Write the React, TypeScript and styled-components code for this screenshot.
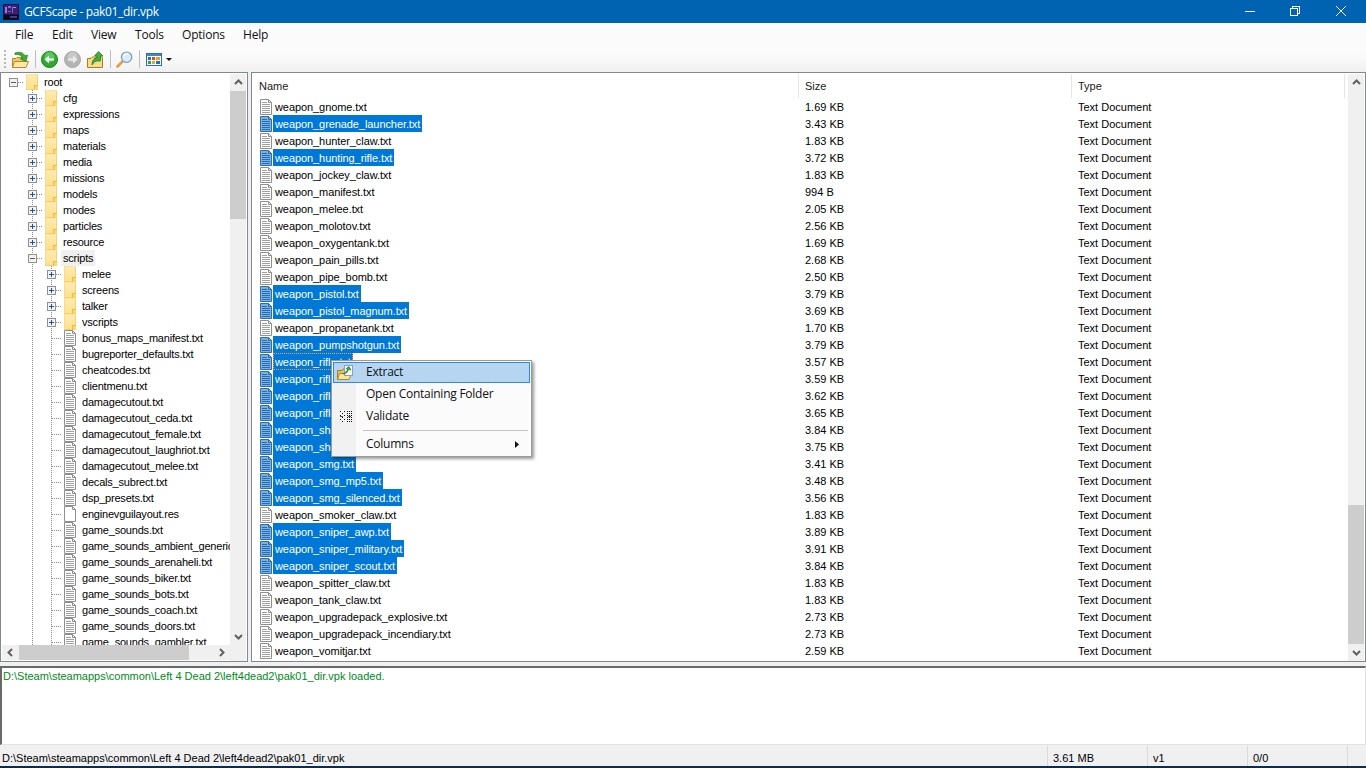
import React from "react";
import styled, { createGlobalStyle } from "styled-components";

const Global = createGlobalStyle`
  html, body { margin: 0; padding: 0; height: 100%; overflow: hidden; background: #f0f0f0; }
  #root { height: 768px; }
  * { box-sizing: border-box; }
`;

const UI = `"Liberation Sans", Arial, sans-serif`;
const SEGOE = `"Open Sans", "Noto Sans", sans-serif`;

const Window = styled.div`
  position: relative;
  width: 1366px;
  height: 768px;
  display: flex;
  flex-direction: column;
  overflow: hidden;
  font-family: ${UI};
  font-size: 11px;
  color: #000;
  background: #f0f0f0;
`;
const TitleBar = styled.div`
  height: 23px;
  flex: none;
  background: #0063b1;
  display: flex;
  align-items: center;
  padding: 0 2px 0 3px;
  color: #fff;
  font-family: ${SEGOE};
  font-size: 12px;
  letter-spacing: -0.35px;
`;
const TitleText = styled.span`
  margin-left: 5px;
  flex: 1;
`;
const WinBtn = styled.div`
  width: 46px;
  height: 23px;
  padding-bottom: 2px;
  display: flex;
  align-items: center;
  justify-content: center;
  &:first-of-type { margin-right: -1px; }
`;
const MenuBar = styled.div`
  height: 23px;
  flex: none;
  background: #fbfbfb;
  display: flex;
  align-items: center;
  font-family: ${SEGOE};
  font-size: 12px;
  letter-spacing: -0.2px;
  color: #111;
`;
const MenuItem = styled.span<{ $x: number }>`
  width: ${(p) => p.$x}px;
  flex: none;
  &:first-child { margin-left: 15px; }
`;
const Toolbar = styled.div`
  height: 26px;
  flex: none;
  display: flex;
  align-items: center;
  padding-left: 4px;
  background: linear-gradient(to bottom, #fcfcfc 0%, #fbfbfb 30%, #f1f1f1 100%);
`;
const Grip = styled.div`
  width: 2px;
  height: 18px;
  margin-right: 3px;
  background: repeating-linear-gradient(to bottom, #b8b8b8 0 2px, transparent 2px 4px);
`;
const ToolBtn = styled.div`
  width: 23px;
  height: 22px;
  flex: none;
  display: flex;
  align-items: center;
  justify-content: center;
`;
const ToolSep = styled.div`
  width: 1px;
  height: 18px;
  flex: none;
  margin: 0 2px 0 3px;
  background: #bdbdbd;
`;
const DropArrow = styled.svg`
  margin-left: 1px;
  flex: none;
`;
const Panes = styled.div`
  height: 590px;
  flex: none;
  display: flex;
  gap: 3px;
`;
const Pane = styled.div<{ $w: number }>`
  width: ${(p) => p.$w}px;
  flex: none;
  height: 100%;
  border: 1px solid #828790;
  background: #fff;
  display: flex;
  position: relative;
  padding: 1px 1px 0 1px;
`;
const TreeCol = styled.div`
  flex: 1;
  min-width: 0;
  display: flex;
  flex-direction: column;
`;
const TreeBody = styled.div`
  flex: 1;
  overflow: hidden;
  padding: 0 0 0 2px;
  min-height: 0;
  letter-spacing: -0.2px;
`;
const TreeRow = styled.div`
  height: 16px;
  display: flex;
  align-items: center;
  white-space: nowrap;
`;
const Indent = styled.div<{ $line?: boolean; $elbow?: boolean }>`
  width: 19px;
  height: 16px;
  flex: none;
  display: flex;
  align-items: center;
  justify-content: center;
  background-repeat: no-repeat;
  background-image: ${(p) =>
    [
      p.$line ? "repeating-linear-gradient(to bottom, #8a8a8a 0 1px, transparent 1px 2px)" : "",
      p.$elbow ? "repeating-linear-gradient(to right, #8a8a8a 0 1px, transparent 1px 2px)" : "",
    ]
      .filter(Boolean)
      .join(",") || "none"};
  background-size: ${(p) =>
    [p.$line ? "1px 16px" : "", p.$elbow ? "10px 1px" : ""].filter(Boolean).join(",") || "auto"};
  background-position: ${(p) =>
    [p.$line ? "9px 0" : "", p.$elbow ? "10px 8px" : ""].filter(Boolean).join(",") || "0 0"};
`;
const TreeIconSlot = styled.div`
  width: 12px;
  height: 16px;
  flex: none;
  margin-left: 3px;
`;
const TreeLabel = styled.span<{ $sel?: boolean }>`
  margin-left: 4px;
  padding: 0 2px;
  height: 16px;
  line-height: 16px;
  background: ${(p) => (p.$sel ? "#f0f0f0" : "transparent")};
`;
const VScroll = styled.div`
  width: 16px;
  flex: none;
  height: 100%;
  background: #f0f0f0;
  display: flex;
  flex-direction: column;
`;
const ScrollBtn = styled.div`
  height: 17px;
  flex: none;
  display: flex;
  align-items: center;
  justify-content: center;
`;
const Thumb = styled.div<{ $h: number; $top: number }>`
  height: ${(p) => p.$h}px;
  margin-top: ${(p) => p.$top}px;
  flex: none;
  background: #cdcdcd;
`;
const Spring = styled.div`
  flex: 1;
`;
const Corner = styled.div`
  height: 16px;
  flex: none;
`;
const HScroll = styled.div`
  height: 15px;
  flex: none;
  background: #f0f0f0;
  display: flex;
  align-items: center;
  margin-bottom: 1px;
`;
const HBtn = styled.div`
  width: 17px;
  height: 15px;
  flex: none;
  display: flex;
  align-items: center;
  justify-content: center;
`;
const HThumb = styled.div`
  width: 170px;
  height: 15px;
  flex: none;
  background: #cdcdcd;
`;
const ListCol = styled.div`
  flex: 1;
  min-width: 0;
  display: flex;
  flex-direction: column;
`;
const Header = styled.div`
  height: 24px;
  flex: none;
  display: flex;
  color: #1a1a1a;
`;
const HeadCell = styled.div<{ $w: number }>`
  width: ${(p) => p.$w}px;
  flex: none;
  padding: 5px 0 0 6px;
  border-right: 1px solid #e5e5e5;
  line-height: 15px;
`;
const FileRow = styled.div`
  height: 17px;
  flex: none;
  display: flex;
  align-items: center;
  white-space: nowrap;
`;
const NameCell = styled.div`
  width: 546px;
  flex: none;
  display: flex;
  align-items: center;
  padding-left: 7px;
`;
const FileLabel = styled.span<{ $sel?: boolean; $focus?: boolean }>`
  margin-left: 1px;
  height: 17px;
  line-height: 18px;
  padding: 0 2px;
  letter-spacing: -0.08px;
  background: ${(p) => (p.$sel ? "#0078d7" : "transparent")};
  color: ${(p) => (p.$sel ? "#fff" : "#000")};
  outline: ${(p) => (p.$focus ? "1px dotted #f0a040" : "none")};
  outline-offset: -1px;
`;
const Cell = styled.div<{ $w: number }>`
  width: ${(p) => p.$w}px;
  flex: none;
  padding-left: 6px;
  line-height: 18px;
`;
const Log = styled.div`
  height: 79px;
  flex: none;
  margin-top: 4px;
  background: #fff;
  border-top: 2px solid #696969;
  border-left: 2px solid #696969;
  border-right: 1px solid #e3e3e3;
  border-bottom: 1px solid #e3e3e3;
  padding: 1px 0 0 1px;
  color: #008a20;
  line-height: 15px;
`;
const Status = styled.div`
  height: 20px;
  flex: none;
  margin-top: 1px;
  display: flex;
  align-items: center;
`;
const StatusPanel = styled.div<{ $w: number }>`
  width: ${(p) => p.$w}px;
  height: 20px;
  flex: none;
  padding-left: 5px;
  line-height: 24px;
  border-right: 1px solid #d9d9d9;
  white-space: nowrap;
  overflow: hidden;
  &:first-child { padding-left: 2px; }
`;
const Strip = styled.div`
  flex: 1;
  background: #0b2c4d;
`;
const CtxMenu = styled.div`
  position: absolute;
  left: 331px;
  top: 360px;
  width: 201px;
  height: 97px;
  background: linear-gradient(to right, #f1f1f1 0 24px, #fbfbfb 24px);
  border: 1px solid #9a9a9a;
  box-shadow: 2px 2px 3px rgba(0, 0, 0, 0.4);
  padding: 1px;
  display: flex;
  flex-direction: column;
  font-family: ${SEGOE};
  font-size: 12px;
  letter-spacing: -0.25px;
  color: #111;
`;
const CtxItem = styled.div<{ $hover?: boolean }>`
  height: 21px;
  margin-bottom: 1px;
  flex: none;
  display: flex;
  align-items: center;
  position: relative;
  border: 1px solid ${(p) => (p.$hover ? "#2f8ae0" : "transparent")};
  background: ${(p) => (p.$hover ? "#b5d5f1" : "transparent")};
`;
const CtxIcon = styled.div`
  width: 23px;
  flex: none;
  display: flex;
  align-items: center;
  justify-content: center;
`;
const CtxText = styled.span`
  margin: 0 0 2px 9px;
  flex: 1;
`;
const CtxSep = styled.div`
  height: 1px;
  flex: none;
  margin: 2px 2px 3px 30px;
  background: #c4c4c4;
`;
const SubArrow = styled.svg`
  margin-right: 10px;
  flex: none;
`;

const Chevron = ({ dir }: { dir: "up" | "down" | "left" | "right" }) => {
  const pts = { up: "1,6 4.5,2.5 8,6", down: "1,3 4.5,6.5 8,3", left: "6,1 2.5,4.5 6,8", right: "3,1 6.5,4.5 3,8" }[dir];
  return (
    <svg width="9" height="9" viewBox="0 0 9 9">
      <polyline points={pts} fill="none" stroke="#606060" strokeWidth="2" />
    </svg>
  );
};

const FolderTall = () => (
  <svg width="12" height="16" viewBox="0 0 12 16" style={{ display: "block" }} shapeRendering="crispEdges">
    <defs>
      <linearGradient id="fg" x1="0" y1="0" x2="0" y2="1">
        <stop offset="0" stopColor="#ffebb0" />
        <stop offset="1" stopColor="#ffe08a" />
      </linearGradient>
    </defs>
    <rect x="0" y="0" width="12" height="16" fill="url(#fg)" />
    <rect x="0" y="0" width="1" height="16" fill="#f7dc8e" />
    <rect x="11" y="0" width="1" height="11" fill="#f3d27a" />
    <rect x="0" y="0" width="12" height="1" fill="#f7e2a4" />
    <rect x="8" y="12" width="4" height="4" fill="#ffd766" />
    <rect x="8" y="11" width="4" height="1" fill="#e7bd55" />
    <rect x="8" y="11" width="1" height="5" fill="#e7bd55" />
    <rect x="0" y="15" width="8" height="1" fill="#f3d27a" />
  </svg>
);

const FileIcon = ({ blank, sel }: { blank?: boolean; sel?: boolean }) => {
  const border = sel ? "#2f6fa8" : "#8f8f8f";
  const fill = sel ? "#7bb0e2" : "#fff";
  const line = sel ? "#2a6cb0" : "#a0a0a0";
  return (
    <svg width="12" height="16" viewBox="0 0 12 16" style={{ display: "block" }}>
      <path d="M0.5 0.5H8.5L11.5 3.5V15.5H0.5Z" fill={fill} stroke={border} />
      <path d="M8.5 0.5V3.5H11.5" fill="none" stroke={border} />
      {!blank &&
        [3, 5, 7, 9, 11, 13].map((y) => (
          <rect key={y} x="2" y={y} width={y === 3 ? 5 : 8} height="1" fill={line} />
        ))}
    </svg>
  );
};

const Expander = ({ open }: { open?: boolean }) => (
  <svg width="9" height="9" viewBox="0 0 9 9" style={{ display: "block", background: "#fff" }}>
    <rect x="0.5" y="0.5" width="8" height="8" fill="#f2f2f2" stroke="#8e8f8f" />
    <rect x="2" y="4" width="5" height="1" fill={open ? "#5a5a6a" : "#2a4a9a"} />
    {!open && <rect x="4" y="2" width="1" height="5" fill="#2a4a9a" />}
  </svg>
);

const AppIcon = () => (
  <svg width="16" height="16" viewBox="0 0 16 16" shapeRendering="crispEdges">
    <rect width="16" height="16" fill="#2a0f4a" />
    <rect x="1" y="1" width="14" height="9" fill="#3b1f7a" />
    <rect x="2" y="3" width="2" height="6" fill="#8f7fd0" />
    <rect x="5" y="2" width="3" height="2" fill="#7f6fc0" />
    <rect x="9" y="3" width="4" height="1" fill="#a090e0" />
    <rect x="9" y="3" width="1" height="6" fill="#7f6fc0" />
    <rect x="5" y="7" width="3" height="1" fill="#6a5ab0" />
    <rect x="0" y="11" width="16" height="5" fill="#0c0818" />
    <rect x="7" y="12" width="7" height="2" fill="#4a3a8a" />
  </svg>
);

const OpenIcon = () => (
  <svg width="17" height="17" viewBox="0 0 17 17">
    <path d="M0.5 7.5H4L5 6.5H13V16.5H0.5Z" fill="#f0c860" stroke="#b08a2a" />
    <path d="M0.5 16.5L2.5 10.5H16.5L14 16.5Z" fill="#fde8a6" stroke="#b08a2a" />
    <path d="M3 2C7 0.5 11 1 13 5L15.5 4L14 10.5L8.5 8L10.5 6.8C9 4 6.5 3 3 3.5Z" fill="#3fae3a" stroke="#1f7a1f" strokeWidth="0.7" />
  </svg>
);

const UpIcon = () => (
  <svg width="17" height="17" viewBox="0 0 17 17">
    <path d="M0.5 7.5H4L5 6H15.5V16.5H0.5Z" fill="#f8dc8a" stroke="#a87f20" />
    <path d="M3.5 6.5H15.5" stroke="#e0b040" />
    <path d="M5 14C5 9.5 7 7 10 6.5V5H7.5L11.5 0.5L16 5H13.5V10H10.5C8.5 10 6.5 11.5 5 14Z" fill="#3fae3a" stroke="#1f7a1f" strokeWidth="0.7" />
  </svg>
);

const RoundArrow = ({ flip, gray }: { flip?: boolean; gray?: boolean }) => (
  <svg width="17" height="17" viewBox="0 0 17 17">
    <circle cx="8.5" cy="8.5" r="8" fill={gray ? "#b4b4b4" : "#2fa82f"} stroke={gray ? "#a8a8a8" : "#1b7f1b"} />
    <circle cx="8.5" cy="6" r="5" fill={gray ? "#c8c8c8" : "#58c858"} />
    <path
      d={flip ? "M4 7.5H9V4.5L13.5 8.5L9 12.5V9.5H4Z" : "M13 7.5H8V4.5L3.5 8.5L8 12.5V9.5H13Z"}
      fill={gray ? "#eaeaea" : "#fff"}
    />
  </svg>
);

const SearchIcon = () => (
  <svg width="17" height="17" viewBox="0 0 17 17">
    <path d="M7 10L1.5 15.5" stroke="#e0a040" strokeWidth="2.6" strokeLinecap="round" />
    <circle cx="10.6" cy="6.2" r="5.2" fill="#dcedfa" stroke="#7b98b4" strokeWidth="1.2" />
    <path d="M7.5 5C8.5 3.5 10.5 2.6 12.5 3" stroke="#fff" strokeWidth="1.2" fill="none" />
  </svg>
);

const ViewIcon = () => (
  <svg width="16" height="13" viewBox="0 0 16 13" shapeRendering="crispEdges">
    <rect x="0.5" y="0.5" width="15" height="12" fill="#fff" stroke="#2a6fb5" />
    <rect x="1" y="1" width="14" height="2" fill="#3f86cc" />
    <rect x="2" y="4" width="3" height="3" fill="#2a6fb5" />
    <rect x="6" y="4" width="3" height="3" fill="#d84a2a" />
    <rect x="10" y="4" width="4" height="3" fill="#e8a020" />
    <rect x="2" y="8" width="3" height="3" fill="#3aa03a" />
    <rect x="6" y="8" width="3" height="3" fill="#d8b020" />
    <rect x="10" y="8" width="4" height="3" fill="#2a6fb5" />
  </svg>
);

const ExtractIcon = () => (
  <svg width="17" height="15" viewBox="0 0 17 15">
    <path d="M0.5 5.5H5L6 4H11V14.5H0.5Z" fill="#e8c060" stroke="#a87f20" />
    <path d="M0.5 14.5L2.5 8.5H14.5L12 14.5Z" fill="#fde59a" stroke="#b08a2a" />
    <rect x="7.5" y="0.5" width="8" height="10" fill="#fff" stroke="#8aa0b8" />
    <path d="M6 9C9 9 11 7 11.5 4.5L14 5L12 1.5L9 3.5L10.5 4C10 6 8.5 7.5 6 9Z" fill="#38a838" stroke="#1f7a1f" strokeWidth="0.6" />
  </svg>
);

const ValidateIcon = () => (
  <svg width="12" height="12" viewBox="0 0 12 12" shapeRendering="crispEdges">
    {[0, 2, 4, 6, 8, 10].flatMap((y) =>
      [0, 2, 4, 7, 9, 11].map((x) =>
        (x + y) % 4 !== 2 ? <rect key={`${x}-${y}`} x={x} y={y} width="1" height="1" fill="#111" /> : null
      )
    )}
    <rect x="0" y="5" width="3" height="1" fill="#555" />
    <rect x="8" y="5" width="3" height="1" fill="#555" />
  </svg>
);

type Node = { name: string; kind: "root" | "dir" | "open" | "sub" | "file" | "blank" };
const dirs = ["cfg", "expressions", "maps", "materials", "media", "missions", "models", "modes", "particles", "resource"];
const subs = ["melee", "screens", "talker", "vscripts"];
const tfiles = [
  "bonus_maps_manifest.txt", "bugreporter_defaults.txt", "cheatcodes.txt", "clientmenu.txt", "damagecutout.txt",
  "damagecutout_ceda.txt", "damagecutout_female.txt", "damagecutout_laughriot.txt", "damagecutout_melee.txt",
  "decals_subrect.txt", "dsp_presets.txt", "enginevguilayout.res", "game_sounds.txt", "game_sounds_ambient_generic.txt",
  "game_sounds_arenaheli.txt", "game_sounds_biker.txt", "game_sounds_bots.txt", "game_sounds_coach.txt",
  "game_sounds_doors.txt", "game_sounds_gambler.txt",
];
const tree: Node[] = [
  { name: "root", kind: "root" },
  ...dirs.map((name): Node => ({ name, kind: "dir" })),
  { name: "scripts", kind: "open" },
  ...subs.map((name): Node => ({ name, kind: "sub" })),
  ...tfiles.map((name): Node => ({ name, kind: name.endsWith(".res") ? "blank" : "file" })),
];

const files: [string, string, boolean?][] = [
  ["gnome", "1.69 KB"], ["grenade_launcher", "3.43 KB", true], ["hunter_claw", "1.83 KB"], ["hunting_rifle", "3.72 KB", true],
  ["jockey_claw", "1.83 KB"], ["manifest", "994 B"], ["melee", "2.05 KB"], ["molotov", "2.56 KB"], ["oxygentank", "1.69 KB"],
  ["pain_pills", "2.68 KB"], ["pipe_bomb", "2.50 KB"], ["pistol", "3.79 KB", true], ["pistol_magnum", "3.69 KB", true],
  ["propanetank", "1.70 KB"], ["pumpshotgun", "3.79 KB", true], ["rifle", "3.57 KB", true], ["rifle_ak47", "3.59 KB", true],
  ["rifle_desert", "3.62 KB", true], ["rifle_m60", "3.65 KB", true], ["shotgun_chrome", "3.84 KB", true], ["shotgun_spas", "3.75 KB", true],
  ["smg", "3.41 KB", true], ["smg_mp5", "3.48 KB", true], ["smg_silenced", "3.56 KB", true], ["smoker_claw", "1.83 KB"],
  ["sniper_awp", "3.89 KB", true], ["sniper_military", "3.91 KB", true], ["sniper_scout", "3.84 KB", true], ["spitter_claw", "1.83 KB"],
  ["tank_claw", "1.83 KB"], ["upgradepack_explosive", "2.73 KB"], ["upgradepack_incendiary", "2.73 KB"], ["vomitjar", "2.59 KB"],
];

const menus: [string, number][] = [["File", 37], ["Edit", 39], ["View", 44], ["Tools", 47], ["Options", 61], ["Help", 40]];
const PATH = "D:\\Steam\\steamapps\\common\\Left 4 Dead 2\\left4dead2\\pak01_dir.vpk";

const TreeItem = ({ node }: { node: Node }) => {
  const { name, kind } = node;
  const isLeaf = kind === "file" || kind === "blank";
  return (
    <TreeRow>
      <Indent $elbow={kind === "root"}>{kind === "root" && <Expander open />}</Indent>
      {kind !== "root" && (
        <Indent $line $elbow={kind === "dir" || kind === "open"}>
          {kind === "dir" && <Expander />}
          {kind === "open" && <Expander open />}
        </Indent>
      )}
      {(kind === "sub" || isLeaf) && (
        <Indent $line $elbow>
          {kind === "sub" && <Expander />}
        </Indent>
      )}
      <TreeIconSlot>{isLeaf ? <FileIcon blank={kind === "blank"} /> : <FolderTall />}</TreeIconSlot>
      <TreeLabel $sel={kind === "open"}>{name}</TreeLabel>
    </TreeRow>
  );
};

export default function App() {
  return (
    <Window>
      <Global />
      <TitleBar>
        <AppIcon />
        <TitleText>GCFScape - pak01_dir.vpk</TitleText>
        <WinBtn>
          <svg width="10" height="10" viewBox="0 0 10 10"><rect x="0" y="5" width="10" height="1" fill="#fff" /></svg>
        </WinBtn>
        <WinBtn>
          <svg width="10" height="10" viewBox="0 0 10 10" shapeRendering="crispEdges">
            <path d="M2.5 2V0.5H9.5V7.5H8" fill="none" stroke="#fff" />
            <rect x="0.5" y="2.5" width="7" height="7" fill="none" stroke="#fff" />
          </svg>
        </WinBtn>
        <WinBtn>
          <svg width="10" height="10" viewBox="0 0 10 10"><path d="M0 0L10 10M10 0L0 10" stroke="#fff" strokeWidth="1" /></svg>
        </WinBtn>
      </TitleBar>
      <MenuBar>
        {menus.map(([m, w]) => (
          <MenuItem key={m} $x={w}>{m}</MenuItem>
        ))}
      </MenuBar>
      <Toolbar>
        <Grip />
        <ToolBtn><OpenIcon /></ToolBtn>
        <ToolSep />
        <ToolBtn><RoundArrow /></ToolBtn>
        <ToolBtn><RoundArrow flip gray /></ToolBtn>
        <ToolBtn><UpIcon /></ToolBtn>
        <ToolSep />
        <ToolBtn><SearchIcon /></ToolBtn>
        <ToolSep />
        <ToolBtn><ViewIcon /></ToolBtn>
        <DropArrow width="6" height="3" viewBox="0 0 6 3"><path d="M0 0H6L3 3Z" fill="#111" /></DropArrow>
      </Toolbar>
      <Panes>
        <Pane $w={248}>
          <TreeCol>
            <TreeBody>
              {tree.map((n) => <TreeItem key={n.name} node={n} />)}
            </TreeBody>
            <HScroll>
              <HBtn><Chevron dir="left" /></HBtn>
              <HThumb />
              <Spring />
              <HBtn><Chevron dir="right" /></HBtn>
            </HScroll>
          </TreeCol>
          <VScroll>
            <ScrollBtn><Chevron dir="up" /></ScrollBtn>
            <Thumb $h={128} $top={0} />
            <Spring />
            <ScrollBtn><Chevron dir="down" /></ScrollBtn>
            <Corner />
          </VScroll>
        </Pane>
        <Pane $w={1115}>
          <ListCol>
            <Header>
              <HeadCell $w={546}>Name</HeadCell>
              <HeadCell $w={273}>Size</HeadCell>
              <HeadCell $w={273}>Type</HeadCell>
            </Header>
            {files.map(([n, s, sel]) => (
              <FileRow key={n}>
                <NameCell>
                  <FileIcon sel={sel} />
                  <FileLabel $sel={sel} $focus={n === "rifle"}>weapon_{n}.txt</FileLabel>
                </NameCell>
                <Cell $w={273}>{s}</Cell>
                <Cell $w={273}>Text Document</Cell>
              </FileRow>
            ))}
          </ListCol>
          <VScroll>
            <ScrollBtn><Chevron dir="up" /></ScrollBtn>
            <Thumb $h={139} $top={414} />
            <Spring />
            <ScrollBtn><Chevron dir="down" /></ScrollBtn>
          </VScroll>
        </Pane>
      </Panes>
      <Log>{PATH} loaded.</Log>
      <Status>
        <StatusPanel $w={1048}>{PATH}</StatusPanel>
        <StatusPanel $w={100}>3.61 MB</StatusPanel>
        <StatusPanel $w={100}>v1</StatusPanel>
        <StatusPanel $w={100}>0/0</StatusPanel>
      </Status>
      <Strip />
      <CtxMenu>
        <CtxItem $hover>
          <CtxIcon><ExtractIcon /></CtxIcon>
          <CtxText>Extract</CtxText>
        </CtxItem>
        <CtxItem>
          <CtxIcon />
          <CtxText>Open Containing Folder</CtxText>
        </CtxItem>
        <CtxItem>
          <CtxIcon><ValidateIcon /></CtxIcon>
          <CtxText>Validate</CtxText>
        </CtxItem>
        <CtxSep />
        <CtxItem>
          <CtxIcon />
          <CtxText>Columns</CtxText>
          <SubArrow width="4" height="7" viewBox="0 0 4 7"><path d="M0 0L4 3.5L0 7Z" fill="#111" /></SubArrow>
        </CtxItem>
      </CtxMenu>
    </Window>
  );
}
